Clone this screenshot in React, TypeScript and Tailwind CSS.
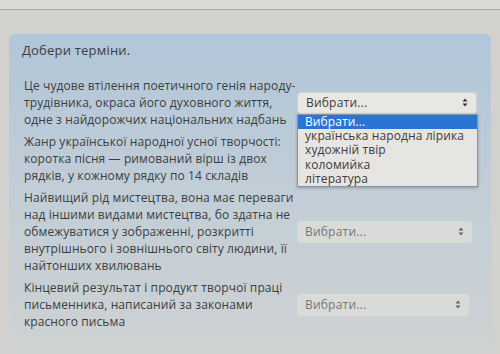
import React from "react";

const OPTIONS = ["Вибрати...", "українська народна лірика", "художній твір", "коломийка", "література"];

const ROWS: { lines: string[]; selW: number; open?: boolean; dim?: boolean }[] = [
  {
    lines: [
      "Це чудове втілення поетичного генія народу-",
      "трудівника, окраса його духовного життя,",
      "одне з найдорожчих національних надбань",
    ],
    selW: 180,
    open: true,
  },
  {
    lines: [
      "Жанр української народної усної творчості:",
      "коротка пісня — римований вірш із двох",
      "рядків, у кожному рядку по 14 складів",
    ],
    selW: 0,
  },
  {
    lines: [
      "Найвищий рід мистецтва, вона має переваги",
      "над іншими видами мистецтва, бо здатна не",
      "обмежуватися у зображенні, розкритті",
      "внутрішнього і зовнішнього світу людини, її",
      "найтонших хвилювань",
    ],
    selW: 175,
    dim: true,
  },
  {
    lines: [
      "Кінцевий результат і продукт творчої праці",
      "письменника, написаний за законами",
      "красного письма",
    ],
    selW: 172,
    dim: true,
  },
];

function Arrows({ dim }: { dim?: boolean }) {
  return (
    <svg width="6" height="9" viewBox="0 0 6 9" className={dim ? "opacity-70" : ""}>
      <path d="M3 0.5 L5.5 3.5 H0.5 Z" fill="#333" />
      <path d="M3 8.5 L5.5 5.5 H0.5 Z" fill="#333" />
    </svg>
  );
}

function Select({ w, open, dim }: { w: number; open?: boolean; dim?: boolean }) {
  return (
    <div className="relative" style={{ width: w }}>
      <div
        className={`h-[22px] rounded-[4px] flex items-center justify-between pl-[8px] pr-[8px] text-[12px] tracking-[0.2px] ${
          dim ? "bg-[#d9dbd9] text-[#75787a]" : "bg-[#e9e7e3] text-[#3d3f41] border border-[#cfd0d0]"
        }`}
      >
        <span>Вибрати...</span>
        <Arrows dim={dim} />
      </div>
      {open && (
        <div className="absolute left-0 top-[22px] w-[181px] bg-[#e7e5e1] border border-[#8796a8] text-[12px] leading-[14.4px] tracking-[0.1px] text-[#3a3c3e] z-10 shadow-[0_1px_3px_rgba(0,0,0,0.25)]">
          {OPTIONS.map((o, i) => (
            <div
              key={o}
              className={`pl-[7px] h-[14.4px] whitespace-nowrap ${i === 0 ? "bg-[#2a74d6] text-white" : ""}`}
            >
              {o}
            </div>
          ))}
        </div>
      )}
    </div>
  );
}

export default function App() {
  return (
    <div
      className="w-[500px] h-[354px] overflow-hidden bg-[#d3d1ce] text-[#3b3e41]"
      style={{ fontFamily: '"Open Sans", "Noto Sans", sans-serif' }}
    >
      <div className="h-[10px] border-b border-[#a9aaab] bg-[#dcdad7]" />
      <div className="ml-[9px] mt-[24px] w-[482px] h-[340px] rounded-[6px] bg-gradient-to-b from-[#b0c6d9] via-[#c3ced7] to-[#cfd2d1] pl-[13px] pt-[6px]">
        <div className="text-[13px] leading-[20px] tracking-[0.2px]">Добери терміни.</div>
        <div className="mt-[17px] flex flex-col gap-[5px]">
          {ROWS.map((r, i) => (
            <div key={i} className="flex items-center">
              <div className="w-[275px] pl-[2px] text-[12px] leading-[17px] tracking-[0.1px]">
                {r.lines.map((l) => (
                  <div key={l} className="whitespace-nowrap">{l}</div>
                ))}
              </div>
              {r.selW > 0 && <Select w={r.selW} open={r.open} dim={r.dim} />}
            </div>
          ))}
        </div>
      </div>
    </div>
  );
}
